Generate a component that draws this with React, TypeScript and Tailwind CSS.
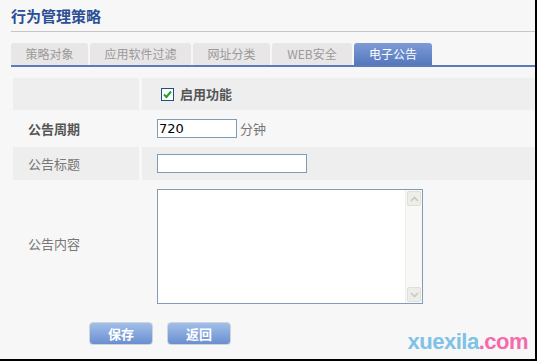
import React from "react";

const tabs = ["策略对象", "应用软件过滤", "网址分类", "WEB安全", "电子公告"];
const tabWidths = ["w-[77px]", "w-[101px]", "w-[77px]", "w-[80px]", "w-[78px]"];

const cjk = { fontFamily: '"Noto Sans CJK SC", "Liberation Sans", sans-serif' };

export default function App() {
  return (
    <div
      className="w-[537px] h-[361px] bg-[#f7f7f7] border-r-2 border-b-2 border-black box-border relative overflow-hidden"
      style={cjk}
    >
      <div className="pl-[11px] pr-0">
        <h1 className="pt-[6px] h-[31px] text-[15px] font-bold text-[#2b4f95] leading-[19px]">
          行为管理策略
        </h1>
        <div className="h-px bg-[#c6c6c6]" />
        {/* tabs */}
        <div className="mt-[11px] flex gap-[2px] h-[22px]">
          {tabs.map((t, i) => {
            const active = i === tabs.length - 1;
            return (
              <div
                key={t}
                className={`${tabWidths[i]} h-full rounded-t-[3px] flex items-center justify-center text-[12px] ${
                  active
                    ? "bg-gradient-to-b from-[#7d9bd6] to-[#5577bd] text-white"
                    : "bg-[#e8e6e6] text-[#9a9a9a]"
                }`}
              >
                {t}
              </div>
            );
          })}
        </div>
        <div className="h-[2px] bg-[#5e7bb9]" />
      </div>

      {/* form */}
      <div className="ml-[13px] mt-[11px] flex flex-col text-[12px] text-[#666]">
        <div className="flex gap-[3px] h-[32px]">
          <div className="w-[126px] bg-[#eeeeee]" />
          <div className="flex-1 bg-[#eeeeee] flex items-center pl-[19px] gap-[6px]">
            <div className="w-[13px] h-[13px] border border-[#1c5180] bg-white flex items-center justify-center">
              <svg width="9" height="9" viewBox="0 0 9 9">
                <path d="M1 4.5 L3.5 7 L8 1.5" stroke="#21a121" strokeWidth="2" fill="none" />
              </svg>
            </div>
            <span className="font-bold text-[#555] text-[13px]">启用功能</span>
          </div>
        </div>

        <div className="flex gap-[3px] h-[37px]">
          <div className="w-[126px] flex items-center pl-[15px] font-bold text-[#555] text-[13px]">公告周期</div>
          <div className="flex-1 flex items-center pl-[15px] gap-[3px]">
            <div className="w-[80px] h-[19px] border border-[#7f9db9] bg-white text-black text-[13px] leading-[17px] pl-[1px]" style={{ fontFamily: '"DejaVu Sans", sans-serif' }}>
              720
            </div>
            <span className="text-[#777] text-[13px]">分钟</span>
          </div>
        </div>

        <div className="flex gap-[3px] h-[33px]">
          <div className="w-[126px] bg-[#eeeeee] flex items-center pl-[15px] text-[#777] text-[13px]">公告标题</div>
          <div className="flex-1 bg-[#eeeeee] flex items-center pl-[15px]">
            <div className="w-[150px] h-[19px] border border-[#7f9db9] bg-white" />
          </div>
        </div>

        <div className="flex gap-[3px] h-[130px]">
          <div className="w-[126px] flex items-center pl-[15px] text-[#777] text-[13px] pb-[2px]">公告内容</div>
          <div className="flex-1 pl-[15px] pt-[9px]">
            <div className="w-[266px] h-[115px] border border-[#7f9db9] bg-white flex justify-end">
              <div className="w-[17px] h-full bg-[#f8f8f6] border-l border-[#eeeeea] flex flex-col justify-between p-[1px]">
                <div className="h-[15px] rounded-[2px] bg-[#eeeee8] border border-[#e0e0da] flex items-center justify-center">
                  <svg width="9" height="6" viewBox="0 0 9 6">
                    <path d="M1 5 L4.5 1.5 L8 5" stroke="#c8c8c4" strokeWidth="1.6" fill="none" />
                  </svg>
                </div>
                <div className="h-[15px] rounded-[2px] bg-[#eeeee8] border border-[#e0e0da] flex items-center justify-center">
                  <svg width="9" height="6" viewBox="0 0 9 6">
                    <path d="M1 1 L4.5 4.5 L8 1" stroke="#c8c8c4" strokeWidth="1.6" fill="none" />
                  </svg>
                </div>
              </div>
            </div>
          </div>
        </div>

        <div className="flex gap-[14px] pl-[76px] mt-[12px]">
          {["保存", "返回"].map((b) => (
            <div
              key={b}
              className="w-[64px] h-[23px] rounded-[4px] border border-[#cfd3da] bg-gradient-to-b from-[#a2bfe9] to-[#6a8fd0] text-white font-bold text-[13px] flex items-center justify-center"
            >
              {b}
            </div>
          ))}
        </div>
      </div>

      <div
        className="absolute right-[7px] bottom-[5px] text-[22px] leading-[24px] font-bold tracking-[-0.5px]"
        style={{ fontFamily: '"Liberation Sans", Arial, sans-serif' }}
      >
        <span className="text-[#7fc2e6]">xuexila</span>
        <span className="text-[#f56aab]">.com</span>
      </div>
    </div>
  );
}
